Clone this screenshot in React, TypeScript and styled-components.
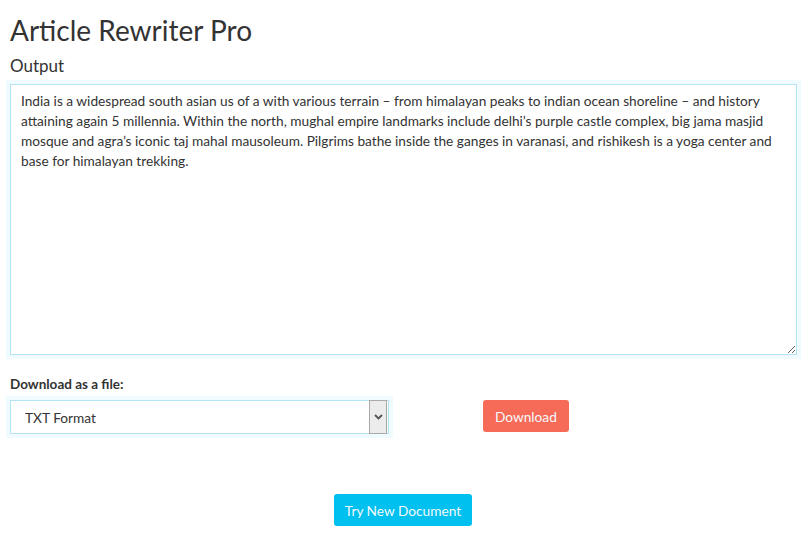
import { createGlobalStyle } from 'styled-components';
import styled from 'styled-components';
import { useState } from 'react';

const GlobalStyle = createGlobalStyle`
  body {
    margin: 0;
    background: #ffffff;
    font-family: Lato, "Noto Sans", sans-serif;
    color: #333333;
  }
  * {
    box-sizing: border-box;
  }
`;

const outputText =
  'India is a widespread south asian us of a with various terrain – from himalayan peaks to indian ocean shoreline – and history attaining again 5 millennia. Within the north, mughal empire landmarks include delhi’s purple castle complex, big jama masjid mosque and agra’s iconic taj mahal mausoleum. Pilgrims bathe inside the ganges in varanasi, and rishikesh is a yoga center and base for himalayan trekking.';

export default function App() {
  const [text, setText] = useState(outputText);
  const [format, setFormat] = useState('txt');

  return (
    <Page>
      <GlobalStyle />
      <Title>Article Rewriter Pro</Title>
      <SectionLabel>Output</SectionLabel>
      <OutputArea value={text} onChange={(e) => setText(e.target.value)} />

      <FieldLabel>Download as a file:</FieldLabel>
      <DownloadRow>
        <SelectWrap>
          <FormatSelect value={format} onChange={(e) => setFormat(e.target.value)}>
            <option value="txt">TXT Format</option>
            <option value="doc">DOC Format</option>
            <option value="pdf">PDF Format</option>
          </FormatSelect>
          <SelectArrow>
            <svg width="9" height="6" viewBox="0 0 9 6">
              <path d="M1 1 L4.5 4.5 L8 1" fill="none" stroke="#555" strokeWidth="1.8" />
            </svg>
          </SelectArrow>
        </SelectWrap>
        <Button $color="#f66a58">Download</Button>
      </DownloadRow>

      <Footer>
        <Button $color="#00c0ef" $wide={false}>Try New Document</Button>
      </Footer>
    </Page>
  );
}

const Page = styled.div`
  padding: 11px 15px 0 10px;
`;

const Title = styled.h1`
  margin: 0;
  font-size: 28px;
  font-weight: 400;
  line-height: 38px;
  color: #333333;
`;

const SectionLabel = styled.h3`
  margin: 5px 0 6px;
  font-size: 17px;
  font-weight: 400;
  line-height: 24px;
  color: #333333;
`;

const OutputArea = styled.textarea`
  display: block;
  width: 787px;
  height: 271px;
  margin: 0;
  padding: 6px 10px 5px;
  border: 1px solid #b5e5f4;
  border-radius: 0;
  box-shadow: 0 0 0 4px #effbff;
  outline: none;
  font-family: inherit;
  font-size: 13.7px;
  line-height: 20px;
  color: #333333;
  resize: vertical;
`;

const FieldLabel = styled.div`
  margin: 20px 0 7px;
  font-size: 13.5px;
  font-weight: 700;
  line-height: 18px;
  color: #333333;
`;

const DownloadRow = styled.div`
  display: flex;
  align-items: flex-start;
  gap: 94px;
`;

const SelectWrap = styled.div`
  position: relative;
  width: 379px;
  height: 34px;
  box-shadow: 0 0 0 4px #effbff;
`;

const FormatSelect = styled.select`
  appearance: none;
  width: 100%;
  height: 100%;
  margin: 0;
  padding: 0 30px 0 14px;
  border: 1px solid #b5e5f4;
  border-radius: 0;
  background: #ffffff;
  font-family: inherit;
  font-size: 13.7px;
  color: #333333;
  outline: none;
`;

const SelectArrow = styled.span`
  position: absolute;
  top: 0;
  right: 2px;
  width: 18px;
  height: 34px;
  display: flex;
  align-items: center;
  justify-content: center;
  background: #ececec;
  border: 1px solid #a9a9a9;
  pointer-events: none;
`;

const Button = styled.button<{ $color: string; $wide?: boolean }>`
  height: 32px;
  padding: 0 ${(p) => (p.$wide === false ? '11px' : '12px')};
  border: none;
  border-radius: 3px;
  background: ${(p) => p.$color};
  color: #f4f9fb;
  font-family: inherit;
  font-size: 13.7px;
  cursor: pointer;
`;

const Footer = styled.div`
  display: flex;
  justify-content: center;
  margin-top: 60px;
  padding-right: 1px;
`;
